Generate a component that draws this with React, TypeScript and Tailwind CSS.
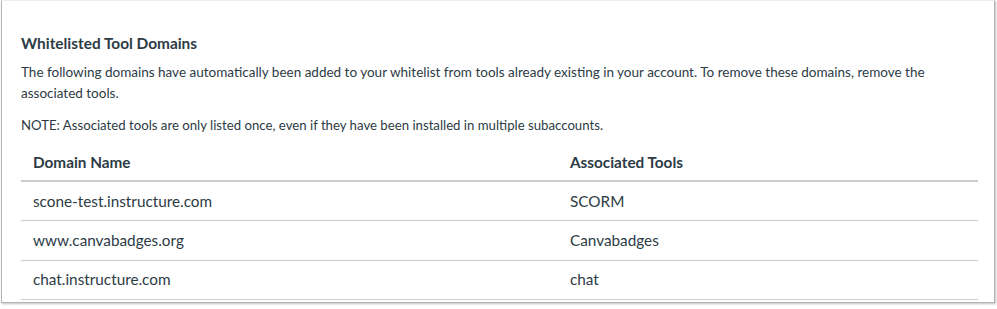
const rows = [
  { domain: "scone-test.instructure.com", tool: "SCORM" },
  { domain: "www.canvabadges.org", tool: "Canvabadges" },
  { domain: "chat.instructure.com", tool: "chat" },
];

export default function App() {
  return (
    <div className="h-[309px] w-[997px] bg-white font-['Lato','Liberation_Sans',sans-serif] text-[#2d3b45]">
      <div className="ml-[1px] h-[303px] w-[994px] border-x border-b border-[#b4b4b4] border-t-[#eeeeee] border-t shadow-[1px_1px_2px_rgba(0,0,0,0.25)] px-[19px] pt-[32px]">
        <h2 className="text-[15.4px] font-bold leading-[20px]">Whitelisted Tool Domains</h2>
        <p className="mt-[9px] max-w-[915px] text-[13.5px] leading-[21px]">
          The following domains have automatically been added to your whitelist from tools already existing in your account. To remove these domains, remove the associated tools.
        </p>
        <p className="mt-[11px] text-[13.2px] leading-[21px]">
          NOTE: Associated tools are only listed once, even if they have been installed in multiple subaccounts.
        </p>
        <table className="mt-[9px] w-[957px] border-collapse text-left">
          <thead>
            <tr className="border-b-2 border-[#c7cdd1]">
              <th className="h-[36px] w-[549px] pl-[12px] text-[15.3px] font-bold">Domain Name</th>
              <th className="h-[36px] text-[15.3px] font-bold">Associated Tools</th>
            </tr>
          </thead>
          <tbody>
            {rows.map((r) => (
              <tr key={r.domain} className="border-b border-[#c7cdd1]">
                <td className="h-[39.5px] pl-[12px] text-[15.3px]">{r.domain}</td>
                <td className="h-[39.5px] text-[15.3px]">{r.tool}</td>
              </tr>
            ))}
          </tbody>
        </table>
      </div>
    </div>
  );
}
